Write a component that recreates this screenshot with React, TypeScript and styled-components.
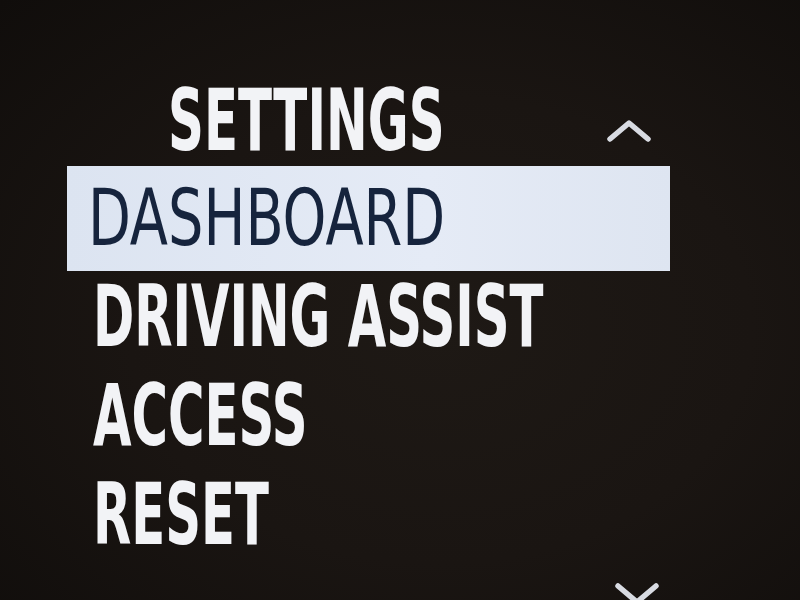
import React from "react";
import styled, {createGlobalStyle} from "styled-components";

const GlobalStyle = createGlobalStyle`
    html, body{
        margin: 0;
        padding: 0;
        background: #0d0b0a;
    }
`

const Screen = styled.div`
    width: 800px;
    height: 600px;
    overflow: hidden;
    box-sizing: border-box;
    padding-left: 67px;
    background: radial-gradient(ellipse at 55% 55%, #1e1915 0%, #1a1512 50%, #100d0b 100%);
    font-family: "DejaVu Sans Condensed", "DejaVu Sans", sans-serif;
`

const Panel = styled.div`
    width: 603px;
    display: flex;
    flex-direction: column;
`

const Header = styled.div`
    height: 166px;
    box-sizing: border-box;
    display: flex;
    align-items: flex-end;
    justify-content: space-between;
    padding: 0 18px 3px 101px;
`

const Title = styled.h1`
    margin: 0;
    font-size: 86px;
    font-weight: 700;
    line-height: 1;
    color: #f2f3f6;
    transform: scaleX(0.645);
    transform-origin: left center;
    white-space: nowrap;
`

const Chevron = styled.svg<{$down?: boolean}>`
    width: 46px;
    height: 24px;
    margin-bottom: ${p => p.$down ? "0" : "20px"};
    stroke: #d8dbe2;
    stroke-width: 5.5;
    fill: none;
    stroke-linecap: round;
    stroke-linejoin: round;
`

const List = styled.ul`
    margin: 0;
    padding: 0;
    list-style: none;
`

const Item = styled.li<{$active?: boolean}>`
    height: ${p => p.$active ? "105px" : "99px"};
    box-sizing: border-box;
    display: flex;
    align-items: center;
    padding-left: ${p => p.$active ? "21px" : "26px"};
    padding-bottom: ${p => p.$active ? "2px" : "9px"};
    background: ${p => p.$active ? "linear-gradient(90deg, #dce4f1, #e5ebf6 60%, #dee5f1)" : "transparent"};
`

const Label = styled.span<{$active?: boolean}>`
    font-size: ${p => p.$active ? "78px" : "85px"};
    font-weight: ${p => p.$active ? 400 : 700};
    line-height: 1;
    color: ${p => p.$active ? "#16243d" : "#f2f3f6"};
    transform: scaleX(${p => p.$active ? 0.795 : 0.65});
    transform-origin: left center;
    white-space: nowrap;
`

const Footer = styled.div`
    display: flex;
    justify-content: flex-end;
    padding: 14px 10px 0 0;
`

const items = ["DASHBOARD", "DRIVING ASSIST", "ACCESS", "RESET"]

const App = ()=>{
    return (
        <>
            <GlobalStyle/>
            <Screen>
                <Panel>
                    <Header>
                        <Title>SETTINGS</Title>
                        <Chevron viewBox="0 0 46 24">
                            <polyline points="4,20 23,4 42,20"/>
                        </Chevron>
                    </Header>
                    <List>
                        {items.map((label, i) => (
                            <Item key={label} $active={i === 0}>
                                <Label $active={i === 0}>{label}</Label>
                            </Item>
                        ))}
                    </List>
                    <Footer>
                        <Chevron $down viewBox="0 0 46 24">
                            <polyline points="4,4 23,20 42,4"/>
                        </Chevron>
                    </Footer>
                </Panel>
            </Screen>
        </>
    )
}

export default App
